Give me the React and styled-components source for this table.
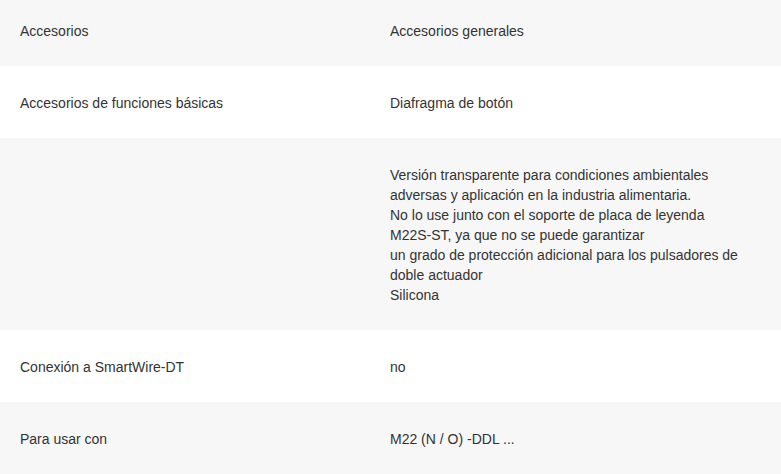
import React from "react";
import styled, { createGlobalStyle } from "styled-components";

const GlobalStyle = createGlobalStyle`
  html, body {
    margin: 0;
    padding: 0;
    background: #fff;
  }
`

const Table = styled.div`
  display: flex;
  flex-direction: column;
  width: 781px;
  font-family: "Liberation Sans", Arial, sans-serif;
  font-size: 14px;
  line-height: 20px;
  color: #333;
`

const Row = styled.div`
  display: grid;
  grid-template-columns: 370px 1fr;
  background-color: ${(props) => (props.$shaded ? "#f7f7f7" : "#fff")};
  padding: ${(props) => (props.$first ? "21px" : "27px")} 0 25px;
`

const Label = styled.div`
  padding: 0 20px;
`

const Value = styled.div`
  padding: 0 20px;
`

const rows = [
  { label: "Accesorios", value: ["Accesorios generales"] },
  { label: "Accesorios de funciones básicas", value: ["Diafragma de botón"] },
  {
    label: "",
    value: [
      "Versión transparente para condiciones ambientales",
      "adversas y aplicación en la industria alimentaria.",
      "No lo use junto con el soporte de placa de leyenda",
      "M22S-ST, ya que no se puede garantizar",
      "un grado de protección adicional para los pulsadores de",
      "doble actuador",
      "Silicona",
    ],
  },
  { label: "Conexión a SmartWire-DT", value: ["no"] },
  { label: "Para usar con", value: ["M22 (N / O) -DDL ..."] },
]

function App() {
  return (
    <>
      <GlobalStyle />
      <Table>
        {rows.map((row, i) => (
          <Row key={i} $shaded={i % 2 === 0} $first={i === 0}>
            <Label>{row.label}</Label>
            <Value>
              {row.value.map((line, j) => (
                <div key={j}>{line}</div>
              ))}
            </Value>
          </Row>
        ))}
      </Table>
    </>
  )
}

export default App;
